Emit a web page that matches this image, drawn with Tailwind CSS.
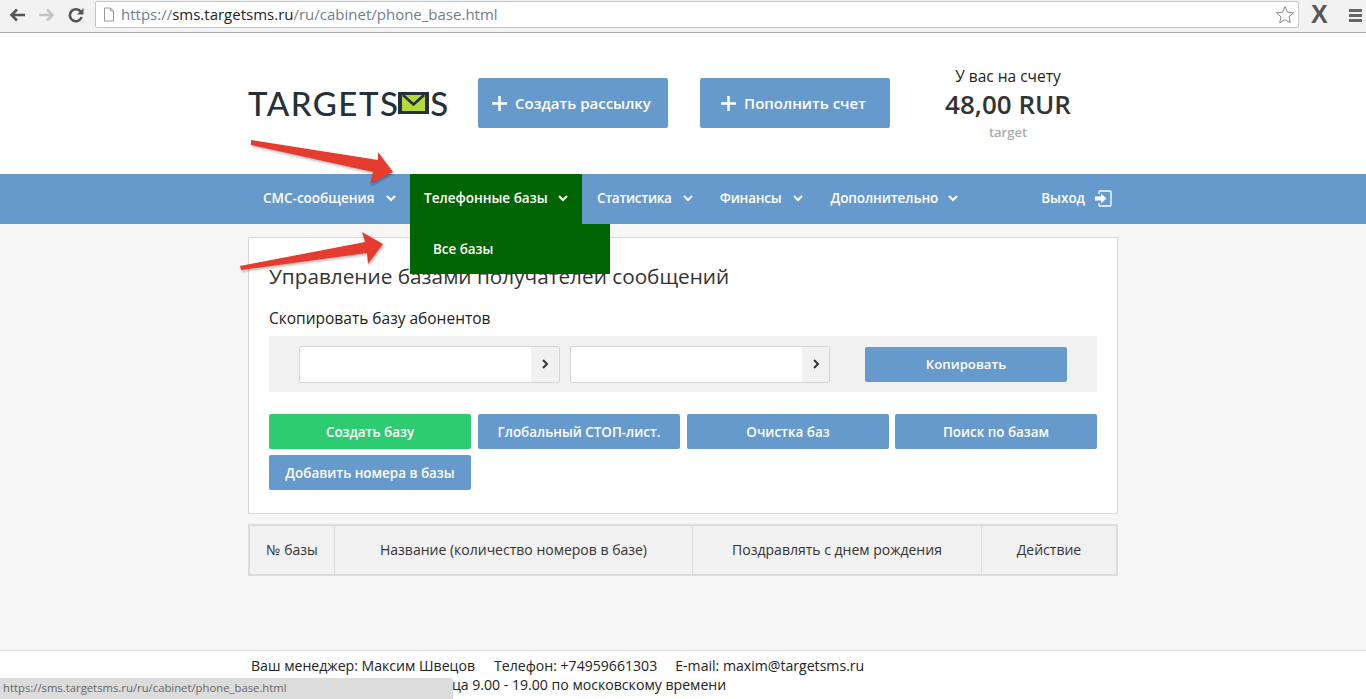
<!DOCTYPE html>
<html lang="ru">

<head>
    <meta charset="utf-8" />
    <meta content="width=device-width, initial-scale=1.0" name="viewport" />
    <title>Телефонные базы</title>
    <script src="https://cdn.jsdelivr.net/npm/@tailwindcss/browser@4"></script>
</head>

<body class="relative h-[699px] w-[1366px] overflow-hidden bg-[#f6f6f6] font-['Open_Sans',sans-serif] text-[#333]">
    <!-- Browser toolbar -->
    <div class="flex h-[33px] items-start border-b border-[#a8a8a8] bg-[#f2f2f2]">
        <div class="flex h-[32px] w-[95px] items-center pb-[3px]">
            <svg class="ml-[9px]" width="17" height="14" viewBox="0 0 17 14"><path d="M8 1.500 2.500 7 8 12.500M3 7h13" fill="none" stroke="#555" stroke-width="2.600" /></svg>
            <svg class="ml-[12px]" width="17" height="14" viewBox="0 0 17 14"><path d="M9 1.500 14.500 7 9 12.500M14 7H1" fill="none" stroke="#c4c4c4" stroke-width="2.600" /></svg>
            <svg class="ml-[13px]" width="16" height="16" viewBox="0 0 16 16"><path d="M13 5.200A6 6 0 1 0 13.600 10" fill="none" stroke="#555" stroke-width="2.600" /><path d="M15.500 1v6.500H9z" fill="#555" /></svg>
        </div>
        <div class="mt-[1px] flex h-[27px] w-[1204px] items-center rounded-[2px] border border-[#c6c6c6] bg-white">
            <svg class="ml-[7px]" width="12" height="15" viewBox="0 0 12 15"><path d="M1.500 1h6l3 3v10h-9zM7.500 1v3h3" fill="#fff" stroke="#999" /></svg>
            <span class="ml-[6px] text-[15px] text-[#6f7f8c]">https://<span class="text-[#222]">sms.targetsms.ru</span>/ru/cabinet/phone_base.html</span>
            <svg class="mr-[3px] ml-auto" width="20" height="19" viewBox="0 0 20 19"><path d="m10 1.500 2.500 5.700 6 .6-4.500 4 1.300 6L10 14.700l-5.300 3.100 1.300-6-4.500-4 6-.6z" fill="#fff" stroke="#888" /></svg>
        </div>
        <div class="mt-[1px] ml-[12px] text-[25px] leading-[27px] font-bold text-[#555] font-['Liberation_Sans',sans-serif]">X</div>
        <div class="mt-[9px] ml-[21px] flex w-[13px] flex-col gap-[2px]">
            <div class="h-[3px] bg-[#666]"></div>
            <div class="h-[3px] bg-[#666]"></div>
            <div class="h-[3px] bg-[#666]"></div>
        </div>
    </div>

    <!-- Header -->
    <header class="h-[141px] bg-white">
        <div class="mx-auto flex w-[870px] items-start">
            <div class="mt-[53px] flex h-[34px] w-[230px] items-center font-['Lato',sans-serif] text-[33px] leading-none font-medium tracking-[1.500px] text-[#26303a]">
                <span>TARGETS</span>
                <svg class="ml-[-1px]" width="31" height="22" viewBox="0 0 31 22"><rect width="31" height="22" fill="#26303a" /><rect x="4" y="3" width="23" height="16" fill="#b5d93c" /><path d="m5 3 10.500 9.500L26 3" fill="none" stroke="#26303a" stroke-width="2.500" /></svg>
                <span class="ml-[1px] tracking-normal">S</span>
            </div>
            <a class="mt-[45px] flex h-[50px] w-[190px] items-center justify-center gap-[8px] rounded-[2px] bg-[#6699cc] pr-[3px] text-[15px] font-semibold text-white">
                <svg width="15" height="15" viewBox="0 0 15 15"><path d="M7.500 0v15M0 7.500h15" stroke="#fff" stroke-width="2.500" /></svg>
                Создать рассылку
            </a>
            <a class="mt-[45px] ml-[32px] flex h-[50px] w-[190px] items-center justify-center gap-[8px] rounded-[2px] bg-[#6699cc] pr-[3px] text-[15px] font-semibold text-white">
                <svg width="15" height="15" viewBox="0 0 15 15"><path d="M7.500 0v15M0 7.500h15" stroke="#fff" stroke-width="2.500" /></svg>
                Пополнить счет
            </a>
            <div class="mt-[33px] ml-[28px] w-[180px] text-center">
                <div class="text-[15.500px] leading-[20px] text-[#222]">У вас на счету</div>
                <div class="mt-[1px] text-[26px] leading-[34px] font-semibold text-[#333]">48,00 RUR</div>
                <div class="mt-[1px] text-[13px] leading-[20px] font-semibold text-[#aaa]">target</div>
            </div>
        </div>
    </header>

    <!-- Nav -->
    <nav class="h-[50px] bg-[#6699cc] pb-[2px] text-[13.500px] font-semibold text-white">
        <div class="mx-auto flex h-full w-[870px] items-center">
            <div class="flex h-full w-[162px] items-center pl-[15px]">
                СМС-сообщения
                <svg class="ml-[12px]" width="10" height="7" viewBox="0 0 10 7"><path d="m1 1 4 4 4-4" fill="none" stroke="#fff" stroke-width="2" /></svg>
            </div>
            <div class="relative flex h-[50px] w-[172px] items-center self-start bg-[#006400] pb-[2px] pl-[14px]">
                Телефонные базы
                <svg class="ml-[10px]" width="10" height="7" viewBox="0 0 10 7"><path d="m1 1 4 4 4-4" fill="none" stroke="#fff" stroke-width="2" /></svg>
                <div class="absolute top-[50px] left-0 z-10 flex h-[50px] w-[200px] items-center bg-[#006400] pl-[23px] text-[13.400px]">Все базы</div>
            </div>
            <div class="ml-[15px] flex items-center tracking-[-0.3px]">
                Статистика
                <svg class="ml-[11px]" width="10" height="7" viewBox="0 0 10 7"><path d="m1 1 4 4 4-4" fill="none" stroke="#fff" stroke-width="2" /></svg>
            </div>
            <div class="ml-[27px] flex items-center tracking-[-0.2px]">
                Финансы
                <svg class="ml-[11px]" width="10" height="7" viewBox="0 0 10 7"><path d="m1 1 4 4 4-4" fill="none" stroke="#fff" stroke-width="2" /></svg>
            </div>
            <div class="ml-[28px] flex items-center tracking-[-0.1px]">
                Дополнительно
                <svg class="ml-[10px]" width="10" height="7" viewBox="0 0 10 7"><path d="m1 1 4 4 4-4" fill="none" stroke="#fff" stroke-width="2" /></svg>
            </div>
            <div class="ml-auto mr-[6px] flex items-center">
                Выход
                <svg class="ml-[10px]" width="17" height="17" viewBox="0 0 17 17"><path d="M5 1h10a1 1 0 0 1 1 1v13a1 1 0 0 1-1 1H5a1 1 0 0 1-1-1v-2M4 4V2a1 1 0 0 1 1-1" fill="none" stroke="#fff" stroke-width="1.300" /><path d="M0 6.500h6V3.500l5.500 5-5.500 5v-3H0z" fill="#fff" /></svg>
            </div>
        </div>
    </nav>

    <!-- Main -->
    <main class="mx-auto w-[870px] pt-[13px]">
        <section class="h-[277px] border border-[#d8d8d8] bg-white px-[20px]">
            <h1 class="pt-[24px] text-[20.750px] leading-[28px] text-[#333]">Управление базами получателей сообщений</h1>
            <div class="mt-[18px] text-[15.500px] leading-[20px] text-[#222]">Скопировать базу абонентов</div>
            <div class="mt-[8px] flex h-[56px] items-center bg-[#f1f1f1] pl-[30px]">
                <div class="flex h-[37px] w-[261px] justify-end rounded-[2px] border border-[#d5d5d5] bg-white">
                    <div class="flex w-[28px] items-center justify-center bg-[#f1f1f1]">
                        <svg width="8" height="10" viewBox="0 0 8 10"><path d="m2 1 4 4-4 4" fill="none" stroke="#333" stroke-width="2" /></svg>
                    </div>
                </div>
                <div class="ml-[10px] flex h-[37px] w-[260px] justify-end rounded-[2px] border border-[#d5d5d5] bg-white">
                    <div class="flex w-[27px] items-center justify-center bg-[#f1f1f1]">
                        <svg width="8" height="10" viewBox="0 0 8 10"><path d="m2 1 4 4-4 4" fill="none" stroke="#333" stroke-width="2" /></svg>
                    </div>
                </div>
                <button class="ml-[35px] h-[35px] w-[202px] rounded-[2px] bg-[#6699cc] pt-[2px] text-[13.200px] font-semibold text-white">Копировать</button>
            </div>
            <div class="mt-[22px] grid grid-cols-[209px_209px_208px_202px] gap-y-[6px] text-[13.400px] font-semibold text-white">
                <button class="h-[35px] w-[202px] rounded-[2px] bg-[#2ecc71] pt-[2px]">Создать базу</button>
                <button class="h-[35px] w-[202px] rounded-[2px] bg-[#6699cc] pt-[2px]">Глобальный СТОП-лист.</button>
                <button class="h-[35px] w-[202px] rounded-[2px] bg-[#6699cc] pt-[2px]">Очистка баз</button>
                <button class="h-[35px] w-[202px] rounded-[2px] bg-[#6699cc] pt-[2px]">Поиск по базам</button>
                <button class="h-[35px] w-[202px] rounded-[2px] bg-[#6699cc] pt-[2px]">Добавить номера в базы</button>
            </div>
        </section>

        <div class="mt-[10px] grid h-[52px] grid-cols-[85px_358px_289px_1fr] items-stretch border-2 border-[#dcdcdc] bg-[#f1f1f1] text-center text-[14px] leading-[48px] text-[#333]">
            <div class="border-r border-[#dcdcdc]">№ базы</div>
            <div class="border-r border-[#dcdcdc]">Название (количество номеров в базе)</div>
            <div class="border-r border-[#dcdcdc]">Поздравлять с днем рождения</div>
            <div>Действие</div>
        </div>
    </main>

    <!-- Footer -->
    <footer class="absolute top-[650px] left-0 h-[49px] w-full border-t border-[#e2e2e2] bg-white text-[14.100px] leading-[19px] text-[#222]">
        <div class="mx-auto w-[870px] pt-[5px] pl-[3px]">
            <div class="flex gap-[18px]">
                <span>Ваш менеджер: Максим Швецов</span>
                <span class="ml-[1px]">Телефон: +74959661303</span>
                <span>E-mail: maxim@targetsms.ru</span>
            </div>
            <div class="ml-[3px]">Режим: понедельник - пятница 9.00 - 19.00 по московскому времени</div>
        </div>
    </footer>

    <!-- Status bubble -->
    <div class="absolute bottom-0 left-0 z-20 flex h-[21px] w-[453px] items-center rounded-tr-[3px] bg-[#dcdcdc] pl-[3px] text-[11.300px] text-[#666]">https://sms.targetsms.ru/ru/cabinet/phone_base.html</div>

    <!-- Annotation arrows -->
    <svg class="absolute top-0 left-0 z-30 drop-shadow-[1px_2px_1px_rgba(0,0,0,0.25)]" width="1366" height="699" viewBox="0 0 1366 699">
        <path d="M251 140 378 160 378 152 393 172 370 184 373 172 251 145z" fill="#e63c2f" />
        <path d="M240 266 365 242 362 232 383 244 368 264 367 253 241 270z" fill="#e63c2f" />
    </svg>
</body>

</html>
